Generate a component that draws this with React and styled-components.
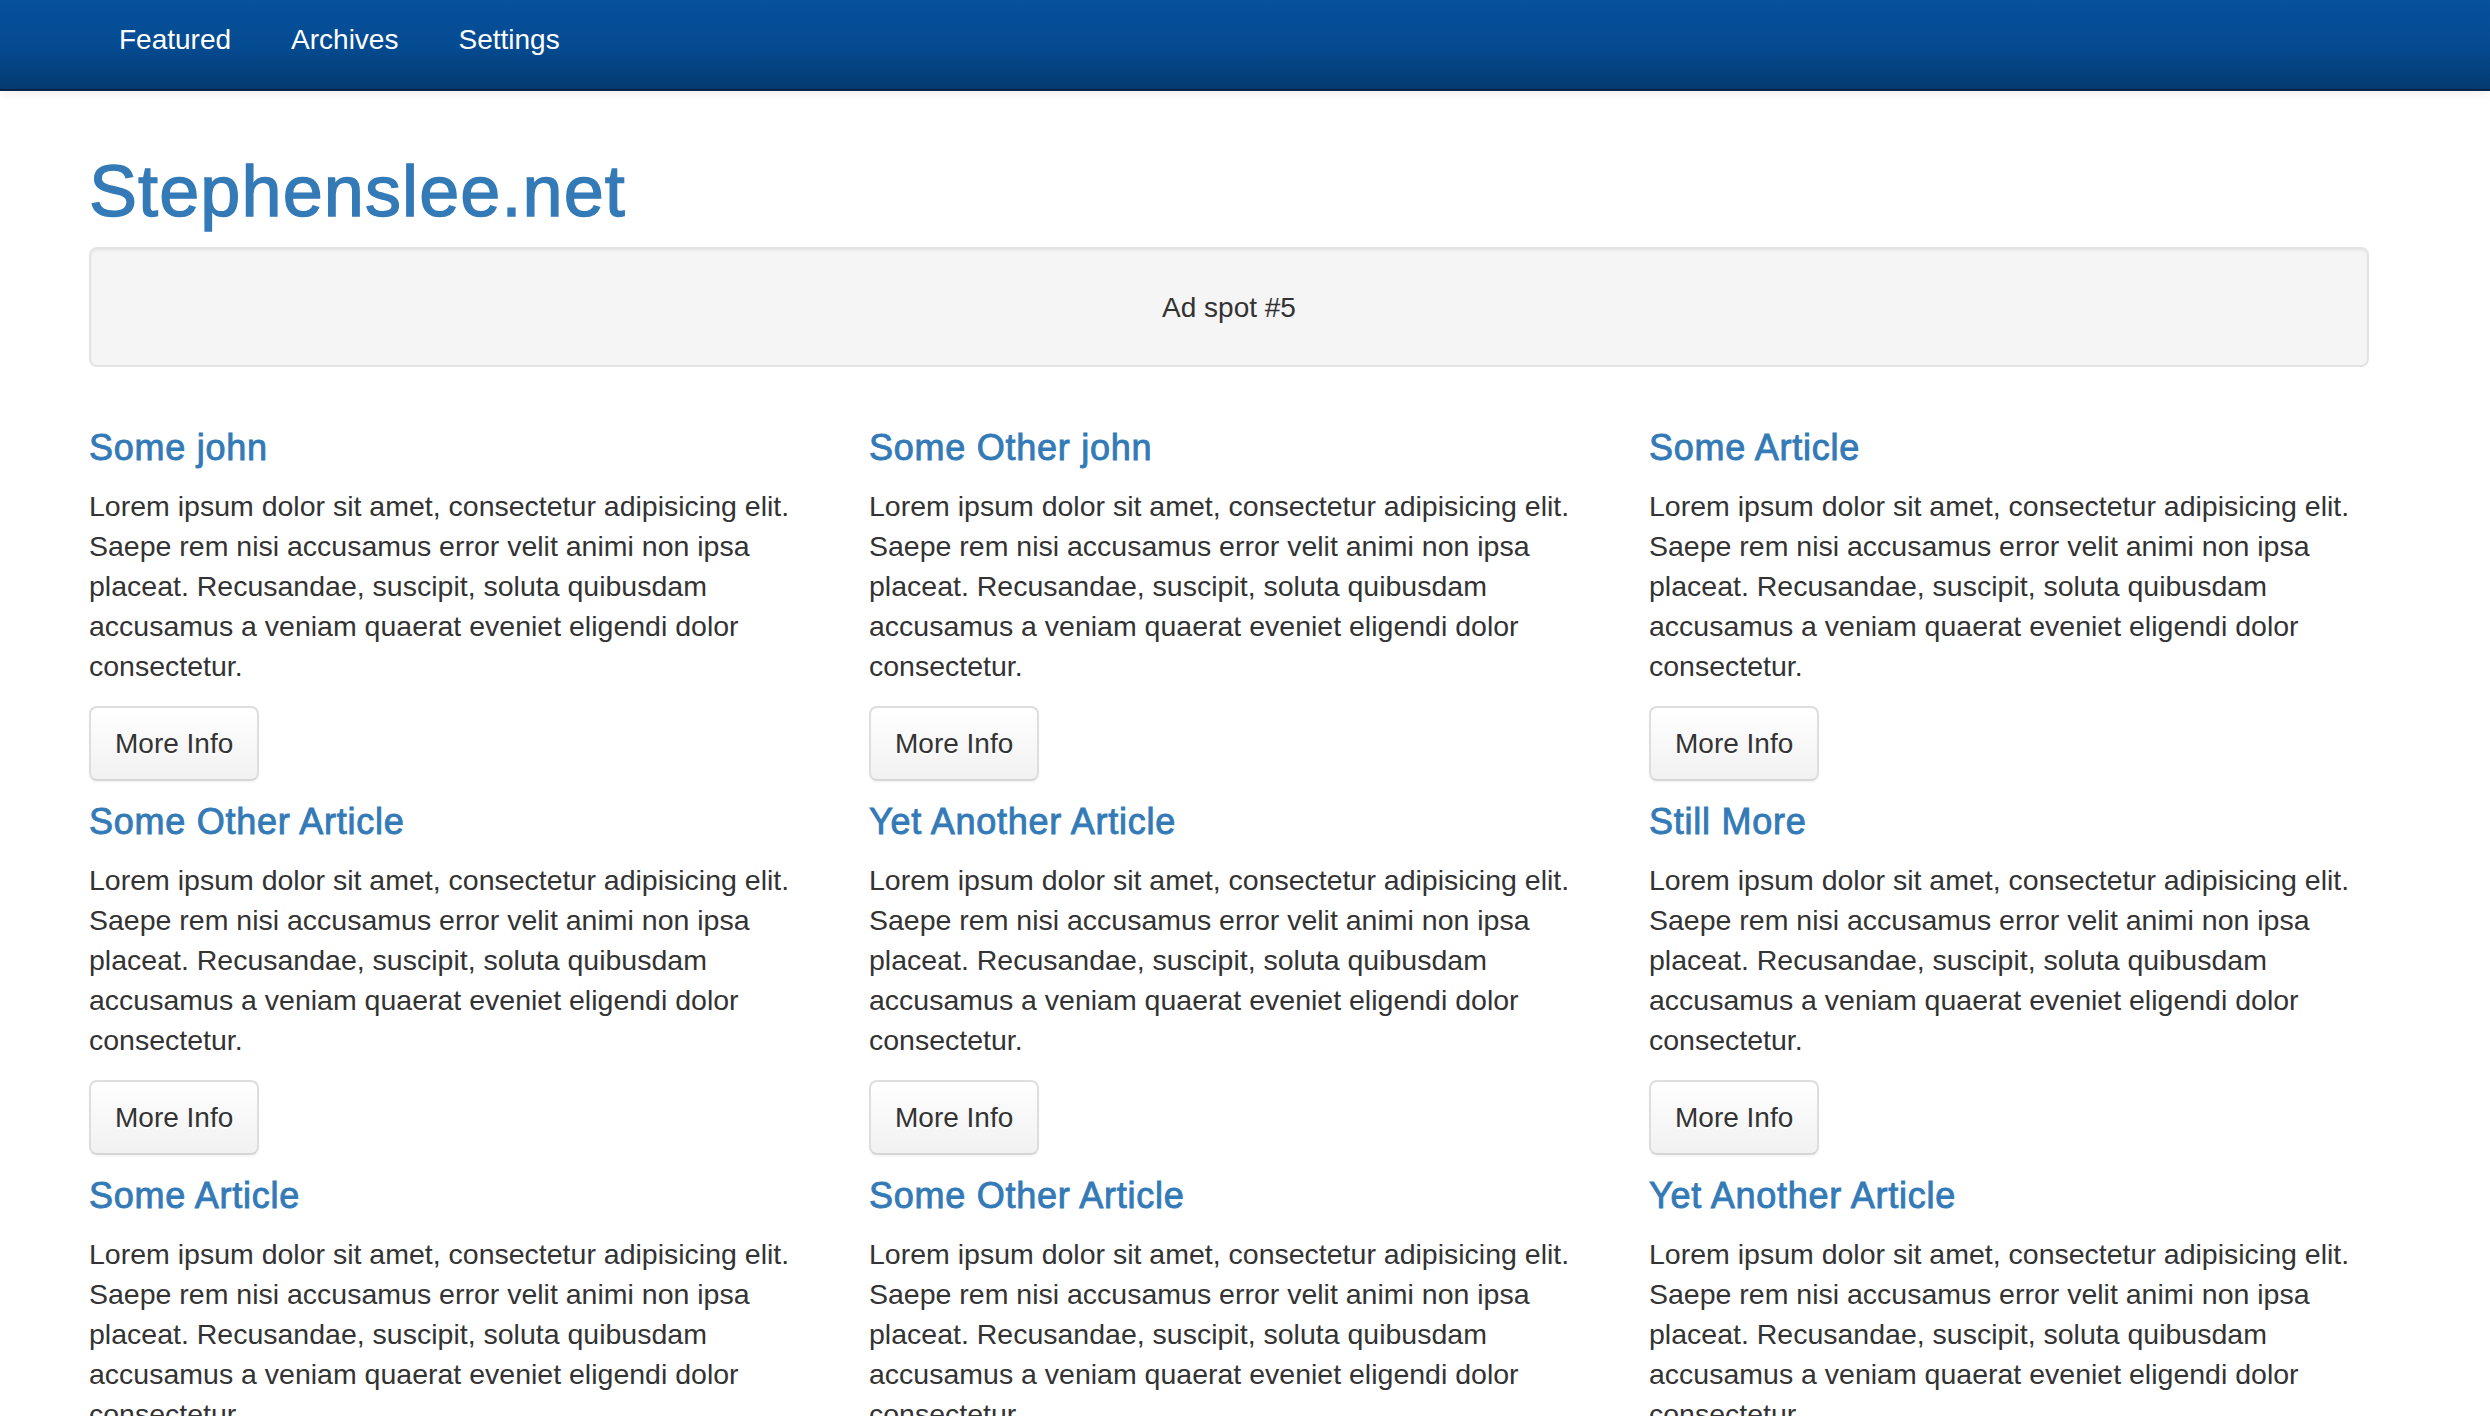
import React from "react";
import styled, { createGlobalStyle } from "styled-components";

const GlobalStyle = createGlobalStyle`
  * { box-sizing: border-box; }
  html, body { margin: 0; padding: 0; background: #ffffff; }
  body {
    font-family: "Liberation Sans", Arial, Helvetica, sans-serif;
    color: #333333;
    font-size: 28px;
    line-height: 40px;
  }
`;

const Navbar = styled.header`
  position: relative;
  z-index: 1;
  height: 91px;
  background: linear-gradient(to bottom, #06519b 0%, #054b92 50%, #033b70 100%);
  border-bottom: 2px solid #02234a;
  box-shadow: 0 3px 10px rgba(0, 0, 0, 0.07);
`;

const Container = styled.div`
  width: 2340px;
  margin-left: 59px;
  padding: 0 30px;
`;

const NavList = styled.nav`
  display: flex;
`;

const NavLink = styled.a`
  display: block;
  padding: 20px 30px;
  color: #ffffff;
  font-size: 28px;
  line-height: 40px;
  text-decoration: none;
`;

const Title = styled.h1`
  margin: 61px 0 16px;
  font-size: 72px;
  line-height: 79.2px;
  font-weight: 400;
  letter-spacing: 1.1px;
  color: #337ab7;
  -webkit-text-stroke: 1.4px #337ab7;
`;

const Well = styled.div`
  margin-bottom: 40px;
  padding: 39px 38px 37px;
  background: #f5f5f5;
  border: 2px solid #e3e3e3;
  border-radius: 8px;
  box-shadow: inset 0 2px 2px rgba(0, 0, 0, 0.05);
  text-align: center;
  font-size: 28px;
  line-height: 40px;
`;

const Grid = styled.section`
  display: grid;
  grid-template-columns: repeat(3, 720px);
  column-gap: 60px;
`;

const Article = styled.article`
  display: flex;
  flex-direction: column;
  align-items: flex-start;
`;

const Heading = styled.h4`
  margin: 21px 0 18.5px;
  font-size: 36px;
  line-height: 39.6px;
  font-weight: 400;
  letter-spacing: 0.75px;
`;

const HeadingLink = styled.a`
  color: #337ab7;
  text-decoration: none;
  -webkit-text-stroke: 0.9px #337ab7;
`;

const Body = styled.p`
  margin: 0 0 20px;
  font-size: 28.5px;
  line-height: 40px;
  color: #333333;
`;

const MoreButton = styled.button`
  display: inline-block;
  margin: 0;
  padding: 15.5px 24px;
  font-family: inherit;
  font-size: 28px;
  line-height: 40px;
  color: #333333;
  background: linear-gradient(to bottom, #ffffff 0%, #f1f1f1 100%);
  border: 2px solid #dedede;
  border-bottom-color: #d6d6d6;
  border-radius: 8px;
  text-shadow: 0 2px 0 #ffffff;
  box-shadow: 0 2px 2px rgba(0, 0, 0, 0.04);
  cursor: pointer;
`;

const LOREM =
  "Lorem ipsum dolor sit amet, consectetur adipisicing elit. Saepe rem nisi accusamus error velit animi non ipsa placeat. Recusandae, suscipit, soluta quibusdam accusamus a veniam quaerat eveniet eligendi dolor consectetur.";

const articles = [
  "Some john",
  "Some Other john",
  "Some Article",
  "Some Other Article",
  "Yet Another Article",
  "Still More",
  "Some Article",
  "Some Other Article",
  "Yet Another Article",
];

export default function App() {
  return (
    <>
      <GlobalStyle />
      <Navbar>
        <Container>
          <NavList>
            <NavLink href="#">Featured</NavLink>
            <NavLink href="#">Archives</NavLink>
            <NavLink href="#">Settings</NavLink>
          </NavList>
        </Container>
      </Navbar>
      <Container>
        <Title>Stephenslee.net</Title>
        <Well>Ad spot #5</Well>
        <Grid>
          {articles.map((t, i) => (
            <Article key={i}>
              <Heading>
                <HeadingLink href="#">{t}</HeadingLink>
              </Heading>
              <Body>{LOREM}</Body>
              <MoreButton type="button">More Info</MoreButton>
            </Article>
          ))}
        </Grid>
      </Container>
    </>
  );
}
